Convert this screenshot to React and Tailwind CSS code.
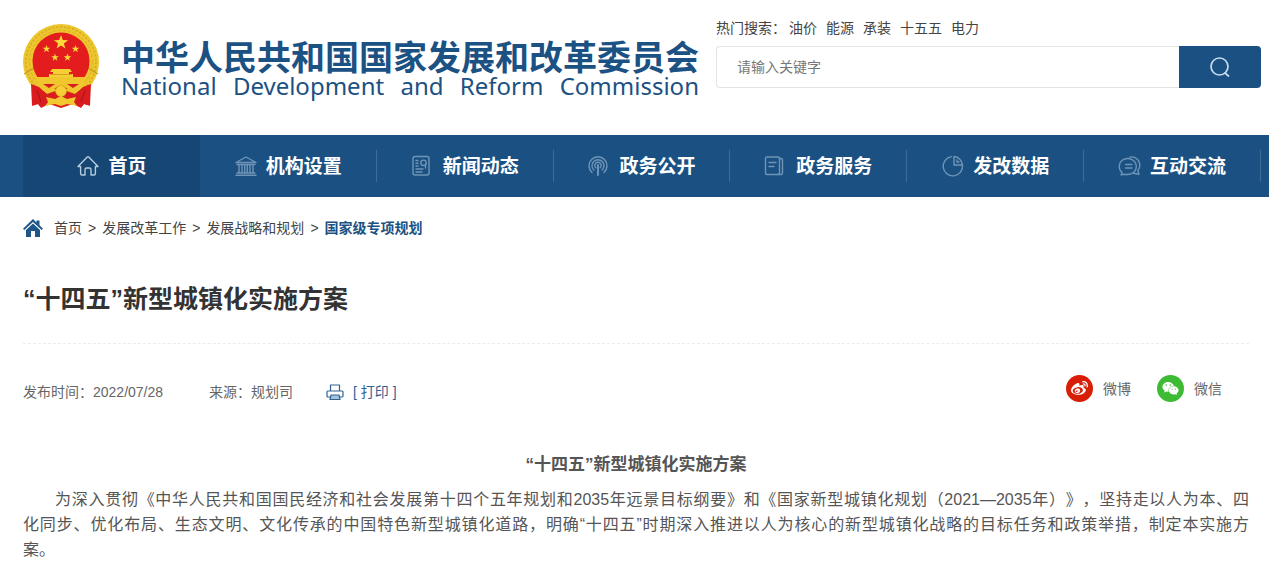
import { useState } from 'react'
import { FaWeibo, FaWeixin } from 'react-icons/fa'

const hotWords = ['油价', '能源', '承装', '十五五', '电力']

const navItems = [
  { label: '首页', icon: HomeIcon, active: true },
  { label: '机构设置', icon: BankIcon },
  { label: '新闻动态', icon: NewsIcon },
  { label: '政务公开', icon: SignalIcon },
  { label: '政务服务', icon: ServiceIcon },
  { label: '发改数据', icon: PieIcon },
  { label: '互动交流', icon: ChatIcon },
]

const crumbs = ['首页', '发展改革工作', '发展战略和规划']

function Line({ children, box = '0 0 24 24', className = 'size-6 text-[#6f94b6]' }) {
  return (
    <svg viewBox={box} className={className} fill="none" stroke="currentColor" strokeWidth="1.4" strokeLinecap="round" strokeLinejoin="round" aria-hidden="true">
      {children}
    </svg>
  )
}

function HomeIcon() {
  return (
    <Line className="size-6 text-[#b5cbe0]">
      <path d="M2 12.5 11 3.2q1-.9 2 0l9 9.3h-2.6v7q0 1.5-1.5 1.5H15v-5.5q0-1.5-1.5-1.5h-3Q9 14 9 15.5V21H6.1q-1.5 0-1.5-1.5v-7Z" />
    </Line>
  )
}

function BankIcon() {
  return (
    <Line>
      <path d="M2 8.5 12 3l10 5.5ZM3 10.5h18M5 10.5V19M8 10.5V19M10.700 10.5V19M13.300 10.5V19M16 10.5V19M19 10.5V19M3 19h18M2 21.3h20" />
    </Line>
  )
}

function NewsIcon() {
  return (
    <Line box="2 0 24 24">
      <rect x="4" y="2.5" width="16" height="18.500" rx="2" />
      <circle cx="14.500" cy="8.800" r="2.700" />
      <path d="M7 6.500h2M7 9.300h2M7 12h2M16.500 11.500v2.500M7 15h7M7 18h6" />
    </Line>
  )
}

function SignalIcon() {
  return (
    <Line box="2 0 24 24">
      <path d="M6 18.500a9 9 0 1 1 12 0M7.800 16a6 6 0 1 1 8.400 0M9.800 13.700a3.200 3.200 0 1 1 4.400 0" />
      <path d="M12 11v10" strokeWidth="2" />
    </Line>
  )
}

function ServiceIcon() {
  return (
    <Line box="2 0 24 24">
      <rect x="3.500" y="3" width="14" height="17.500" rx="1.500" />
      <path d="M17.500 4.500H19q1.500 0 1.500 1.500v13q0 1.500-1.500 1.500h-3M7 8.500h7M7 12.500h5" />
    </Line>
  )
}

function PieIcon() {
  return (
    <Line>
      <path d="M13 2.500V11h8.500A9.700 9.700 0 1 1 10.500 2.600M13 2.500q7 .7 8.500 8.500M16 6v2h2" />
    </Line>
  )
}

function ChatIcon() {
  return (
    <Line>
      <path d="M4.200 18.500A8.500 8 0 1 1 8 20.300L3 20.800ZM7.500 10.500h6.500M7.500 14h6.500" />
      <path d="M12 3.200q2.500-.8 5 .5 4.500 2.300 4.800 7 .2 3.300-2 6l1.200 3.600-5.500-1" />
    </Line>
  )
}

const Star = ({ x, y, s }) => (
  <path transform={`translate(${x} ${y}) scale(${s})`} fill="#fbd93b" d="M0-10 2.400-3.200 9.500-3.100 3.800 1.200 5.900 8.100 0 4 -5.900 8.100 -3.800 1.200 -9.500-3.100 -2.400-3.200Z" />
)

function Emblem() {
  return (
    <svg viewBox="0 0 76 85" className="h-[85px] w-[76px] shrink-0" role="img" aria-label="国徽">
      <path fill="#e01f1c" d="M11 59 65 59 67 82 61 80 58 84 50 80 38 84 26 80 18 84 15 80 9 82Z" />
      <circle cx="38" cy="38" r="38" fill="#edc52c" />
      <circle cx="38" cy="38" r="35" fill="none" stroke="#d3aa24" strokeWidth="1.500" strokeDasharray="2 2" />
      <circle cx="38" cy="38" r="31.500" fill="none" stroke="#d9b228" strokeWidth="1" strokeDasharray="3 2" />
      <path d="M1 50 11 44M75 50 65 44" stroke="#c39b20" strokeWidth="1.200" />
      <circle cx="38" cy="37" r="28.500" fill="#e31c1d" />
      <path fill="#d91c1d" d="M8 60 16 63 24 70 38 65 52 70 60 63 68 60 67 81 61 80 58 83 52 79 46 81H30L24 79 18 83 15 80 9 81Z" />
      <Star x={38} y={18.500} s={0.750} />
      <Star x={23.500} y={25} s={0.400} />
      <Star x={52.500} y={25} s={0.400} />
      <Star x={32} y={33.500} s={0.400} />
      <Star x={44.500} y={33.500} s={0.400} />
      <path fill="#f5cf33" d="M29 45H47L49 48H46V50H50V54H60V58H15V54H26V50H30V48H27Z" />
      <path d="M27 50.500h22" stroke="#d79e25" strokeWidth="1" />
      <path fill="#f0c52e" d="M13 53H63Q62 65 51 69L45 65Q38 59 31 65L25 69Q14 65 13 53Z" />
      <path fill="#d91c1d" d="M20 60H32L26 64ZM56 60H44L50 64Z" />
      <circle cx="38" cy="67" r="5.500" fill="#f5cf33" stroke="#cf9722" strokeWidth="1" strokeDasharray="2 1" />
      <path fill="#f2c830" d="M23 73 32 75 38 72 44 75 53 73 51 78 54 82 44 80 38 82 32 80 22 82 25 78Z" />
      <path d="M14 66 18 78M62 66 58 78" stroke="#a91217" strokeWidth="1" />
    </svg>
  )
}

export default function App() {
  const [keyword, setKeyword] = useState('')

  return (
    <div lang="zh-CN" className="bg-white text-sm text-[#444] font-['Liberation_Sans','Noto_Sans_CJK_SC',sans-serif] [text-spacing-trim:space-all]">
      <header className="flex items-start justify-between pl-[23px] pr-2 h-[135px]">
        <a href="#" className="flex items-start gap-[22px] pt-6 text-[#1c5183]">
          <Emblem />
          <div className="pt-4 whitespace-nowrap">
            <div className="text-[34px] leading-9 font-bold">中华人民共和国国家发展和改革委员会</div>
            <div className="text-2xl leading-5 font-['Noto_Sans',sans-serif] flex justify-between">
              <span>National</span> <span>Development</span> <span>and</span> <span>Reform</span> <span>Commission</span>
            </div>
          </div>
        </a>

        <div className="flex-1 max-w-[545px] ml-4 pt-[18px]">
          <div className="flex leading-5">
            <span className="mr-[3px]">热门搜索：</span>
            <div className="flex gap-[9px]">
              {hotWords.map((w) => <a key={w} href="#">{w}</a>)}
            </div>
          </div>
          <form className="flex h-[42px] mt-2" onSubmit={(e) => e.preventDefault()}>
            <input type="text" aria-label="搜索" placeholder="请输入关键字" value={keyword} onChange={(e) => setKeyword(e.target.value)} className="flex-1 min-w-0 px-5 border border-r-0 border-[#e3e3e3] rounded-l outline-none placeholder:text-[#777]" />
            <button type="submit" aria-label="搜索" className="w-[82px] bg-[#1b5182] rounded-r flex items-center justify-center">
              <svg viewBox="0 0 22 22" className="size-[22px]" fill="none" stroke="#c5dcf0" strokeWidth="1.700" strokeLinecap="round">
                <circle cx="10.500" cy="10.500" r="8.500" />
                <path d="m16 17 3.500 3" />
              </svg>
            </button>
          </form>
        </div>
      </header>

      <nav className="bg-[#1b5182] pl-[23px] pr-2">
        <ul className="flex">
          {navItems.map(({ label, icon: Icon, active }) => (
            <li key={label} className={active ? 'flex-1 bg-[#164774]' : 'flex-1 flex items-center'}>
              <a href="#" className="flex-1 flex h-[62px] items-center justify-center gap-2 text-[19px] font-bold text-white whitespace-nowrap">
                <Icon /> <span className="pt-[2px]">{label}</span>
              </a>
              {!active && <span className="w-px h-8 bg-[#3c6c98]" />}
            </li>
          ))}
        </ul>
      </nav>

      <main className="pl-[23px] pr-5">
        <div className="flex items-center gap-[6px] pt-5 leading-[22px] whitespace-nowrap">
          <svg viewBox="0 0 20 18" className="w-5 h-[18px] mr-[5px]" fill="#1f5588" aria-hidden="true">
            <path d="M10 0 13.500 3.400V1.500H16.500V6.300L20 9.700 18.700 11 10 2.900 1.300 11 0 9.700Z" />
            <path d="M10 4.500 17 11V18H12V12H8V18H3V11Z" />
          </svg>
          {crumbs.map((c) => (
            <span key={c} className="flex gap-[6px]"><a href="#">{c}</a><span>&gt;</span></span>
          ))}
          <a href="#" className="font-bold text-[#1c5183]">国家级专项规划</a>
        </div>

        <h1 className="mt-[42px] pb-[26px] text-[25px] leading-9 font-bold text-[#333] border-b border-dashed border-[#ececec]">“十四五”新型城镇化实施方案</h1>

        <div className="flex items-center justify-between mt-[31px] text-[#666]">
          <div className="flex items-center pt-[6px]">
            <span>发布时间：2022/07/28</span>
            <span className="ml-[46px]">来源：规划司</span>
            <button type="button" className="flex items-center gap-[9px] ml-[33px] text-[#2f6293]">
              <svg viewBox="0 0 18 18" className="size-[18px]" fill="none" stroke="currentColor" strokeWidth="1.200" strokeLinejoin="round" aria-hidden="true">
                <path d="M4.500 8V2H13.500V8M4 14H2Q1 14 1 13V9Q1 8 2 8H16Q17 8 17 9V13Q17 14 16 14H14" />
                <path d="M5 12H13L14 16.500H4Z" fill="#a8c1d8" />
              </svg>
              <span>[ 打印 ]</span>
            </button>
          </div>
          <div className="flex items-center gap-[26px] pr-[27px]">
            <a href="#" className="flex items-center gap-[10px]">
              <span className="size-[27px] rounded-full bg-[#d81e06] text-white flex items-center justify-center"><FaWeibo className="size-[17px]" /></span>
              微博
            </a>
            <a href="#" className="flex items-center gap-[10px]">
              <span className="size-[27px] rounded-full bg-[#3dbb35] text-white flex items-center justify-center"><FaWeixin className="size-[17px]" /></span>
              微信
            </a>
          </div>
        </div>

        <article className="mt-[50px] leading-[25px] text-base text-[#555]">
          <h2 className="text-center text-[17px] font-bold">“十四五”新型城镇化实施方案</h2>
          <p className="mt-[10px] indent-[2em] text-justify [text-align-last:justify]">
            为深入贯彻《中华人民共和国国民经济和社会发展第十四个五年规划和2035年远景目标纲要》和《国家新型城镇化规划（2021—2035年）》，坚持走以人为本、四<br />
            化同步、优化布局、生态文明、文化传承的中国特色新型城镇化道路，明确“十四五”时期深入推进以人为核心的新型城镇化战略的目标任务和政策举措，制定本实施方
          </p>
          <p>案。</p>
        </article>
      </main>
    </div>
  )
}
